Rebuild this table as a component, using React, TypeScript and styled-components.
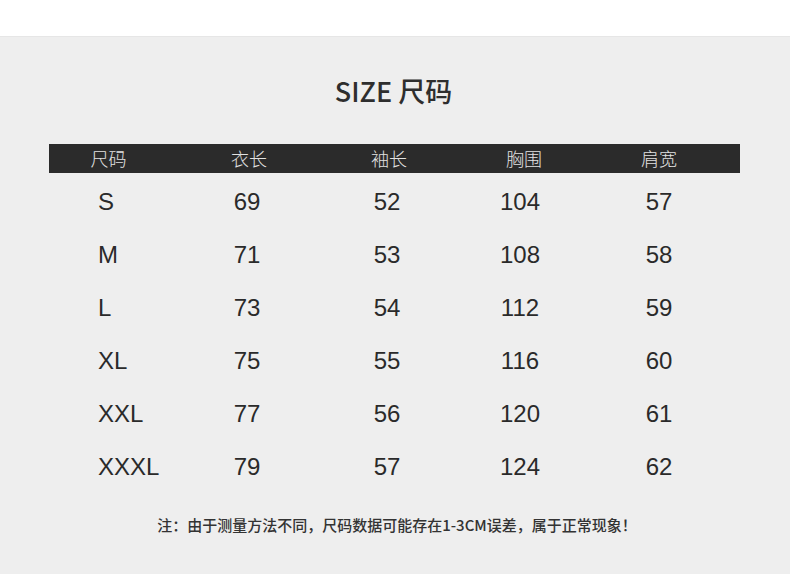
import React from 'react';
import styled, { createGlobalStyle } from 'styled-components';

const GlobalStyle = createGlobalStyle`
  html, body {
    margin: 0;
    padding: 0;
    background: #ffffff;
  }
  body {
    font-family: 'Liberation Sans', Arial, sans-serif;
  }
`;

const Page = styled.div`
  width: 790px;
  height: 574px;
  overflow: hidden;
  background: #ffffff;
  padding-top: 36px;
  box-sizing: border-box;
`;

const Sheet = styled.section`
  height: 538px;
  background: #eeeeee;
  border-top: 1px solid #e6e6e6;
  box-sizing: border-box;
  padding: 0 50px 0 49px;
  display: flex;
  flex-direction: column;
`;

const Title = styled.h1`
  margin: 36px 0 0;
  height: 36px;
  line-height: 36px;
  text-align: center;
  font-family: 'Noto Sans CJK SC', 'Noto Sans', sans-serif;
  font-size: 27px;
  font-weight: 500;
  color: #2e2e2e;
  padding-right: 2px;
`;

const COLS = '119px 162px 118px 152px 118px 1fr';

const HeadBar = styled.div`
  margin-top: 35px;
  height: 29px;
  background: #2b2b2b;
  display: grid;
  grid-template-columns: ${COLS};
  align-items: center;
`;

const HeadCell = styled.div`
  text-align: center;
  font-family: 'Noto Sans CJK SC', sans-serif;
  font-size: 18px;
  font-weight: 300;
  line-height: 29px;
  color: #e2e2e2;
`;

const Body = styled.div`
  margin-top: 2px;
  display: flex;
  flex-direction: column;
`;

const Row = styled.div`
  height: 53px;
  display: grid;
  grid-template-columns: ${COLS};
  align-items: center;
`;

const Cell = styled.div<{ $left?: boolean; $shift?: number }>`
  text-align: ${p => (p.$left ? 'left' : 'center')};
  padding-left: ${p => (p.$left ? '49px' : '0')};
  margin-left: ${p => p.$shift || 0}px;
  font-family: 'Liberation Sans', Arial, sans-serif;
  font-size: 24px;
  line-height: 53px;
  color: #2a2a2a;
`;

const Note = styled.p`
  margin: 22px 0 0;
  text-align: center;
  font-family: 'Noto Sans CJK SC', sans-serif;
  font-size: 15px;
  font-weight: 500;
  line-height: 20px;
  color: #333333;
  padding-left: 5px;
`;

const heads = ['尺码', '衣长', '袖长', '胸围', '肩宽'];

const rows = [
  ['S', '69', '52', '104', '57'],
  ['M', '71', '53', '108', '58'],
  ['L', '73', '54', '112', '59'],
  ['XL', '75', '55', '116', '60'],
  ['XXL', '77', '56', '120', '61'],
  ['XXXL', '79', '57', '124', '62'],
];

// small offsets so numbers sit where the reference puts them
const shifts = [0, -4, -4, -8, 0];

function App(): JSX.Element {
  return (
    <Page>
      <GlobalStyle />
      <Sheet>
        <Title>SIZE 尺码</Title>
        <HeadBar>
          {heads.map(h => (
            <HeadCell key={h}>{h}</HeadCell>
          ))}
        </HeadBar>
        <Body>
          {rows.map(r => (
            <Row key={r[0]}>
              {r.map((v, i) => (
                <Cell key={i} $left={i === 0} $shift={shifts[i]}>
                  {v}
                </Cell>
              ))}
            </Row>
          ))}
        </Body>
        <Note>注：由于测量方法不同，尺码数据可能存在1-3CM误差，属于正常现象！</Note>
      </Sheet>
    </Page>
  );
}

export default App;
